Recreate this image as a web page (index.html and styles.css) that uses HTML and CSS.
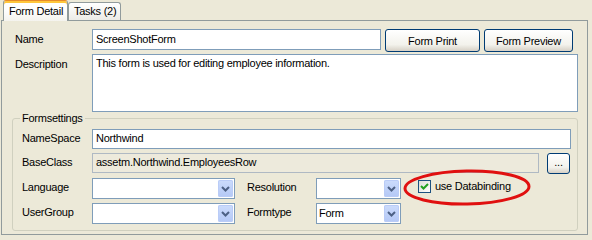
FILE: index.html
```html
<!DOCTYPE html>
<html lang="en">
<head>
    <meta charset="UTF-8">
    <title>Form Detail</title>
    <link rel="stylesheet" href="styles.css">
</head>
<body>
    <div class="tabs">
        <div class="tab active">Form Detail</div>
        <div class="tab">Tasks (2)</div>
    </div>

    <div class="panel">
        <div class="row name-row">
            <label>Name</label>
            <div class="textbox">ScreenShotForm</div>
            <button class="btn">Form Print</button>
            <button class="btn">Form Preview</button>
        </div>

        <div class="row desc-row">
            <label>Description</label>
            <div class="textbox multi">This form is used for editing employee information.</div>
        </div>

        <fieldset class="group">
            <legend>Formsettings</legend>

            <div class="g-row">
                <label>NameSpace</label>
                <div class="textbox wide">Northwind</div>
            </div>

            <div class="g-row">
                <label>BaseClass</label>
                <div class="textbox disabled">assetm.Northwind.EmployeesRow</div>
                <button class="btn dots">...</button>
            </div>

            <div class="g-row tall">
                <label>Language</label>
                <div class="combo big"><span></span>
                    <i class="drop"><svg width="15" height="17" viewBox="0 0 15 17"><path d="M4 7 L7.5 10.5 L11 7" fill="none" stroke="#4D6185" stroke-width="2"/></svg></i>
                </div>
                <label class="sub-label">Resolution</label>
                <div class="combo small"><span></span>
                    <i class="drop"><svg width="15" height="17" viewBox="0 0 15 17"><path d="M4 7 L7.5 10.5 L11 7" fill="none" stroke="#4D6185" stroke-width="2"/></svg></i>
                </div>
                <div class="check">
                    <span class="box"><svg width="11" height="11" viewBox="0 0 11 11"><path d="M2 5 L4.5 7.5 L9 3" fill="none" stroke="#21A121" stroke-width="2"/></svg></span>
                    use Databinding
                    <svg class="circle" width="128" height="37" viewBox="0 0 128 37"><ellipse cx="64" cy="18.5" rx="62" ry="16.5" fill="none" stroke="#E01010" stroke-width="3" transform="rotate(-1 64 18.5)"/></svg>
                </div>
            </div>

            <div class="g-row tall">
                <label>UserGroup</label>
                <div class="combo big"><span></span>
                    <i class="drop"><svg width="15" height="17" viewBox="0 0 15 17"><path d="M4 7 L7.5 10.5 L11 7" fill="none" stroke="#4D6185" stroke-width="2"/></svg></i>
                </div>
                <label class="sub-label">Formtype</label>
                <div class="combo small"><span>Form</span>
                    <i class="drop"><svg width="15" height="17" viewBox="0 0 15 17"><path d="M4 7 L7.5 10.5 L11 7" fill="none" stroke="#4D6185" stroke-width="2"/></svg></i>
                </div>
            </div>
        </fieldset>
    </div>
</body>
</html>
```

FILE: styles.css
```css
body {
    margin: 0;
    background-color: #ECE9D8;
    font-family: "Liberation Sans", Arial, sans-serif;
    font-size: 11px;
    line-height: 13px;
    letter-spacing: -0.25px;
    color: #000;
}
.tabs {
    display: flex;
    align-items: flex-end;
    height: 20px;
    padding-left: 3px;
    position: relative;
    z-index: 1;
}
.tab {
    box-sizing: border-box;
    width: 53px;
    height: 18px;
    padding: 2px 0 0 5px;
    border: 1px solid #919B9C;
    border-bottom: none;
    border-radius: 3px 3px 0 0;
    background: linear-gradient(#FFFFFF, #ECEBE6);
}
.tab.active {
    width: 65px;
    height: 21px;
    margin-bottom: -1px;
    padding-top: 4px;
    border-top: 1px solid #E68B2C;
    box-shadow: inset 0 2px #FFC73C;
    background: linear-gradient(#FFFFFF 40%, #F4F3EE);
}
.panel {
    box-sizing: border-box;
    width: 587px;
    height: 215px;
    margin-left: 1px;
    padding: 8px 9px 0 10px;
    border: 1px solid #919B9C;
}
.row {
    display: flex;
    align-items: flex-start;
    gap: 4px;
    padding-left: 3px;
}
.row label {
    width: 73px;
    flex: none;
    padding-top: 4px;
}
.desc-row {
    margin-top: 2px;
}
.textbox {
    box-sizing: border-box;
    height: 21px;
    padding: 3px 3px 0 3px;
    border: 1px solid #7F9DB9;
    background-color: #fff;
    white-space: nowrap;
}
.name-row .textbox {
    width: 289px;
}
.textbox.multi {
    width: 486px;
    height: 58px;
    padding-top: 2px;
}
.btn {
    box-sizing: border-box;
    height: 23px;
    padding: 0;
    border: 1px solid #003C74;
    border-radius: 3px;
    background: linear-gradient(#FFFFFF, #F3F2EC 70%, #D6D0C5);
    font-family: inherit;
    font-size: 11px;
    letter-spacing: inherit;
    color: #000;
}
.name-row .btn:nth-of-type(1) {
    width: 95px;
}
.name-row .btn:nth-of-type(2) {
    width: 89px;
}
.group {
    margin: 0;
    padding: 0 6px 6px 9px;
    border: 1px solid #D0D0BF;
    border-radius: 3px;
}
.group legend {
    padding: 0 2px;
    margin-left: -2px;
    line-height: 13px;
}
.g-row {
    display: flex;
    align-items: flex-start;
    gap: 4px;
    margin-bottom: 4px;
}
.g-row:first-of-type {
    margin-top: 4px;
}
.g-row:last-child {
    margin-bottom: 0;
}
.g-row label {
    width: 66px;
    flex: none;
    padding-top: 3px;
}
.g-row .textbox {
    height: 20px;
    padding-top: 2px;
}
.textbox.wide {
    flex: 1;
}
.textbox.disabled {
    width: 447px;
    border-color: #AFB9C3;
    background-color: #EDEADC;
}
.btn.dots {
    width: 23px;
    height: 21px;
    margin-left: 4px;
    line-height: 11px;
    padding-bottom: 3px;
}
.g-row.tall .combo {
    height: 21px;
}
.combo {
    box-sizing: border-box;
    position: relative;
    display: flex;
    border: 1px solid #7F9DB9;
    background-color: #fff;
    padding: 3px 0 0 2px;
}
.combo.big {
    width: 143px;
}
.combo.small {
    width: 85px;
}
.drop {
    position: absolute;
    top: 1px;
    right: 1px;
    width: 15px;
    height: 17px;
    border-radius: 2px;
    background: linear-gradient(#CCDCFC, #B4C8F6);
    box-shadow: inset 0 0 0 1px #BACCF7;
}
.drop svg {
    display: block;
}
.g-row label.sub-label {
    width: 65px;
    margin-left: 8px;
}
.check {
    position: relative;
    display: flex;
    align-items: center;
    gap: 4px;
    margin-left: 13px;
    padding-top: 2px;
}
.check .box {
    box-sizing: border-box;
    width: 13px;
    height: 13px;
    border: 1px solid #1C5180;
    background: linear-gradient(135deg, #DCDCD7, #FFFFFF);
}
.check .box svg {
    display: block;
}
.circle {
    position: absolute;
    left: -15px;
    top: -9px;
}
```
